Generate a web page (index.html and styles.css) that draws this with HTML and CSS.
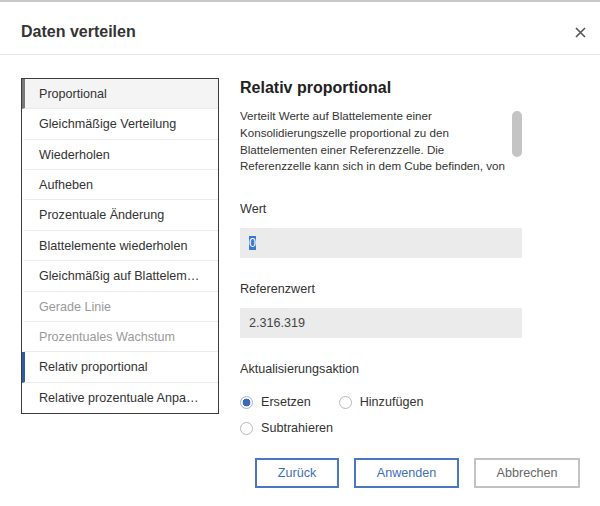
FILE: index.html
```html
<!DOCTYPE html>
<html lang="de">
<head>
<meta charset="utf-8">
<title>Daten verteilen</title>
<link rel="stylesheet" href="styles.css">
</head>
<body>
<div class="dialog">
  <header class="dialog-header">
    <h1 class="dialog-title">Daten verteilen</h1>
    <button class="close-btn" aria-label="Schließen">
      <svg width="11" height="11" viewBox="0 0 11 11"><path d="M1 1L10 10M10 1L1 10" stroke="#555" stroke-width="1.6" fill="none"/></svg>
    </button>
  </header>
  <div class="dialog-body">
    <ul class="method-list">
      <li class="method current">Proportional</li>
      <li class="method">Gleichmäßige Verteilung</li>
      <li class="method">Wiederholen</li>
      <li class="method">Aufheben</li>
      <li class="method">Prozentuale Änderung</li>
      <li class="method">Blattelemente wiederholen</li>
      <li class="method">Gleichmäßig auf Blattelemente verteilen</li>
      <li class="method disabled">Gerade Linie</li>
      <li class="method disabled">Prozentuales Wachstum</li>
      <li class="method active">Relativ proportional</li>
      <li class="method">Relative prozentuale Anpassung</li>
    </ul>
    <section class="detail">
      <h2 class="detail-title">Relativ proportional</h2>
      <div class="desc">
        <p class="desc-text">Verteilt Werte auf Blattelemente einer Konsolidierungszelle proportional zu den Blattelementen einer Referenzzelle. Die Referenzzelle kann sich in dem Cube befinden, von dem aus die Verteilung gestartet wird, oder in einem anderen Cube.</p>
        <div class="scroll-track"><div class="scroll-thumb"></div></div>
      </div>
      <label class="field-label">Wert</label>
      <div class="field"><span class="selected-text">0</span></div>
      <label class="field-label">Referenzwert</label>
      <div class="field">2.316.319</div>
      <div class="field-label">Aktualisierungsaktion</div>
      <div class="radio-row">
        <span class="radio checked"></span><span class="radio-label">Ersetzen</span>
        <span class="radio second"></span><span class="radio-label">Hinzufügen</span>
      </div>
      <div class="radio-row row2">
        <span class="radio"></span><span class="radio-label">Subtrahieren</span>
      </div>
      <div class="actions">
        <button class="btn primary back">Zurück</button>
        <button class="btn primary apply">Anwenden</button>
        <button class="btn cancel">Abbrechen</button>
      </div>
    </section>
  </div>
</div>
</body>
</html>
```
FILE: styles.css
```css
* { box-sizing: border-box; }
html, body { margin: 0; padding: 0; background: #fff; }
body {
  font-family: "Liberation Sans", Arial, sans-serif;
  color: #333;
  font-size: 12.6px;
}
.dialog {
  width: 600px;
  height: 506px;
  border-top: 2px solid #c9c9c9;
}
.dialog-header {
  height: 53px;
  border-bottom: 1px solid #e6e6e6;
  display: flex;
  align-items: center;
  justify-content: space-between;
  padding: 8px 14px 0 21px;
}
.dialog-title {
  margin: 0;
  font-size: 16px;
  font-weight: bold;
  color: #333;
}
.close-btn {
  border: 0;
  background: none;
  padding: 0;
  width: 11px;
  height: 11px;
  display: flex;
}
.dialog-body {
  display: flex;
  padding: 23px 20px 0 21px;
}
.method-list {
  list-style: none;
  margin: 0;
  padding: 0;
  width: 198px;
  height: 336px;
  border: 1px solid #3c3c3c;
  flex: none;
}
.method {
  height: 30.36px;
  line-height: 30.5px;
  border-bottom: 1px solid #ececec;
  padding: 0 18px 0 14px;
  white-space: nowrap;
  overflow: hidden;
  text-overflow: ellipsis;
  color: #333;
  border-left: 3px solid transparent;
}
.method:last-child { border-bottom: 0; }
.method.current {
  background: #f4f4f4;
  border-left-color: #777;
}
.method.active { border-left-color: #2f5c9c; }
.method.disabled { color: #9a9a9a; }

.detail {
  margin-left: 21px;
  flex: 1;
}
.detail-title {
  margin: 0;
  font-size: 16px;
  font-weight: bold;
  line-height: 20px;
  color: #222;
}
.desc {
  display: flex;
  margin-top: 10px;
  height: 68px;
}
.desc-text {
  margin: 0;
  width: 272px;
  height: 68px;
  overflow: hidden;
  font-size: 11.6px;
  line-height: 16.8px;
}
.scroll-track { width: 10px; }
.scroll-thumb {
  margin-top: 3px;
  height: 46px;
  width: 10px;
  border-radius: 5px;
  background: #c4c4c4;
}
.field-label {
  display: block;
  margin-top: 25px;
  line-height: 16px;
}
.field {
  margin-top: 11px;
  height: 30px;
  width: 282px;
  background: #ebebeb;
  padding-left: 9px;
  line-height: 30px;
  color: #444;
}
.field + .field-label { margin-top: 23px; }
.selected-text {
  background: #3a78d8;
  color: #fff;
}
.radio-row {
  display: flex;
  align-items: center;
  height: 20px;
  margin-top: 15px;
}
.radio-row.row2 { margin-top: 6px; }
.radio {
  width: 13px;
  height: 13px;
  border-radius: 50%;
  border: 1px solid #b8b8b8;
  background: #fff;
  flex: none;
}
.radio.checked {
  border: 1px solid #9bb6de;
  background: radial-gradient(circle, #3b6cb5 0 3.6px, #fff 4.2px);
}
.radio.second { margin-left: 28px; }
.radio-label { margin-left: 8px; }
.actions {
  display: flex;
  justify-content: flex-end;
  gap: 15px;
  margin-top: 20px;
}
.btn {
  height: 30px;
  font-family: inherit;
  font-size: 12.6px;
  background: #fff;
  border: 2px solid #4a78c0;
  color: #3f6fb5;
  padding: 0;
}
.btn.back { width: 84px; }
.btn.apply { width: 105px; }
.btn.cancel {
  width: 106px;
  border-color: #c2c2c2;
  color: #666;
}
```
